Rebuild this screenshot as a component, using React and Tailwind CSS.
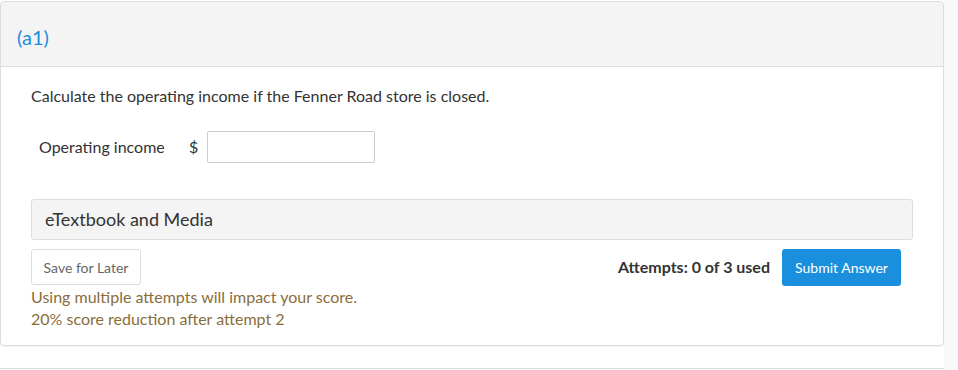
import React from 'react';

export default function App() {
  return (
    <div className="w-[958px] h-[370px] bg-white font-['Lato',sans-serif] text-[#333] flex overflow-hidden">
      <div className="w-[944px] pt-px flex flex-col">
        <div className="border border-[#ddd] rounded-[4px] shadow-[0_1px_1px_rgba(0,0,0,0.05)] bg-white">
          <div className="h-[65px] bg-[#f4f4f4] border-b border-[#ddd] rounded-t-[4px] px-4 flex items-center">
            <span className="text-[20px] leading-[24px] text-[#1a8fdd] pt-[6px]">(a1)</span>
          </div>
          <div className="px-[30px] pt-[18px] pb-[15px]">
            <p className="text-[16px] leading-[22px]">Calculate the operating income if the Fenner Road store is closed.</p>
            <div className="flex items-center mt-[24px] pl-[8px]">
              <span className="text-[16px] w-[150px]">Operating income</span>
              <span className="text-[16px] w-[18px]">$</span>
              <input type="text" className="w-[168px] h-[32px] border border-[#ccc] rounded-[2px] bg-white outline-none" />
            </div>
            <div className="mt-[36px] h-[41px] bg-[#f4f4f4] border border-[#ddd] rounded-[3px] px-[13px] flex items-center">
              <span className="text-[18px]">eTextbook and Media</span>
            </div>
            <div className="flex items-start justify-between mt-[9px]">
              <div>
                <button className="h-[36px] w-[110px] border border-[#ddd] rounded-[3px] bg-white text-[14px] text-[#666]">Save for Later</button>
                <div className="mt-[1px] text-[16px] leading-[22px] text-[#8a6d3b]">
                  <p>Using multiple attempts will impact your score.</p>
                  <p>20% score reduction after attempt 2</p>
                </div>
              </div>
              <div className="flex items-center mr-[12px]">
                <span className="text-[16px] font-bold mr-[12px] pb-[2px]">Attempts: 0 of 3 used</span>
                <button className="h-[37px] w-[119px] bg-[#1a8fdd] rounded-[3px] text-white text-[14px]">Submit Answer</button>
              </div>
            </div>
          </div>
        </div>
        <div className="mt-[22px] h-[10px] border-t border-[#ddd]" />
      </div>
      <div className="flex-1 bg-[#f9f9f9]" />
    </div>
  );
}
